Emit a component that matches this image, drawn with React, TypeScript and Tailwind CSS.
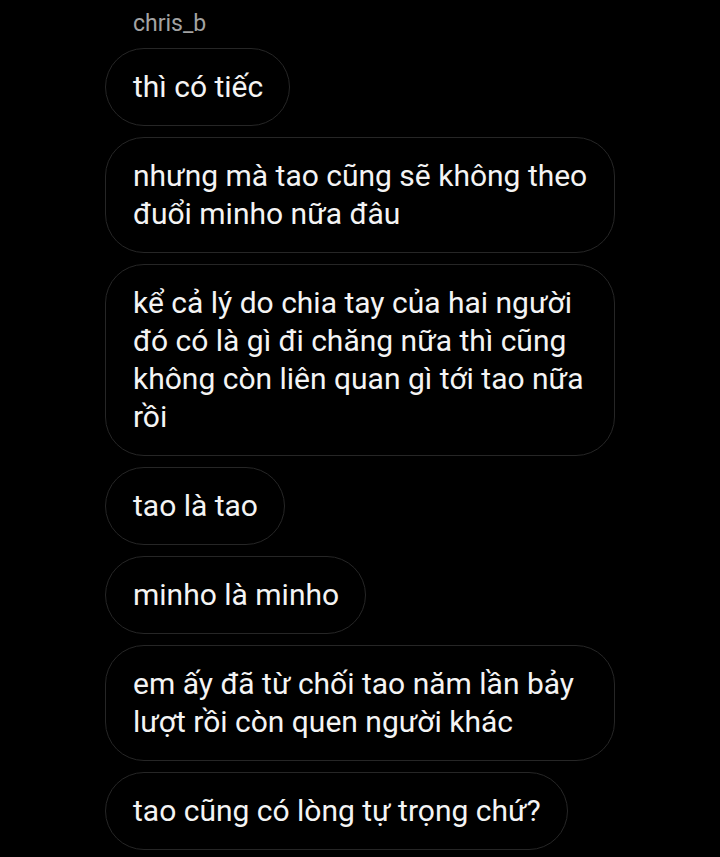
import React from 'react';

const messages = [
  'thì có tiếc',
  'nhưng mà tao cũng sẽ không theo đuổi minho nữa đâu',
  'kể cả lý do chia tay của hai người đó có là gì đi chăng nữa thì cũng không còn liên quan gì tới tao nữa rồi',
  'tao là tao',
  'minho là minho',
  'em ấy đã từ chối tao năm lần bảy lượt rồi còn quen người khác',
  'tao cũng có lòng tự trọng chứ?',
];

function Bubble({ text }: { text: string }) {
  return (
    <div className="self-start max-w-[510px] rounded-[39px] border border-[#262626] bg-black pl-[27px] pr-[26px] py-[19px] text-[30px] leading-[38px] text-[#f4f4f4]">
      {text}
    </div>
  );
}

export default function App() {
  return (
    <div
      className="min-h-[857px] w-[720px] bg-black pl-[105px] pt-[11px]"
      style={{ fontFamily: 'Roboto, "Noto Sans", sans-serif' }}
    >
      <div className="pl-[28px] text-[23px] leading-[26px] text-[#a3a3a3]">chris_b</div>
      <div className="mt-[11px] flex flex-col gap-[11px]">
        {messages.map((m, i) => (
          <Bubble key={i} text={m} />
        ))}
      </div>
    </div>
  );
}
